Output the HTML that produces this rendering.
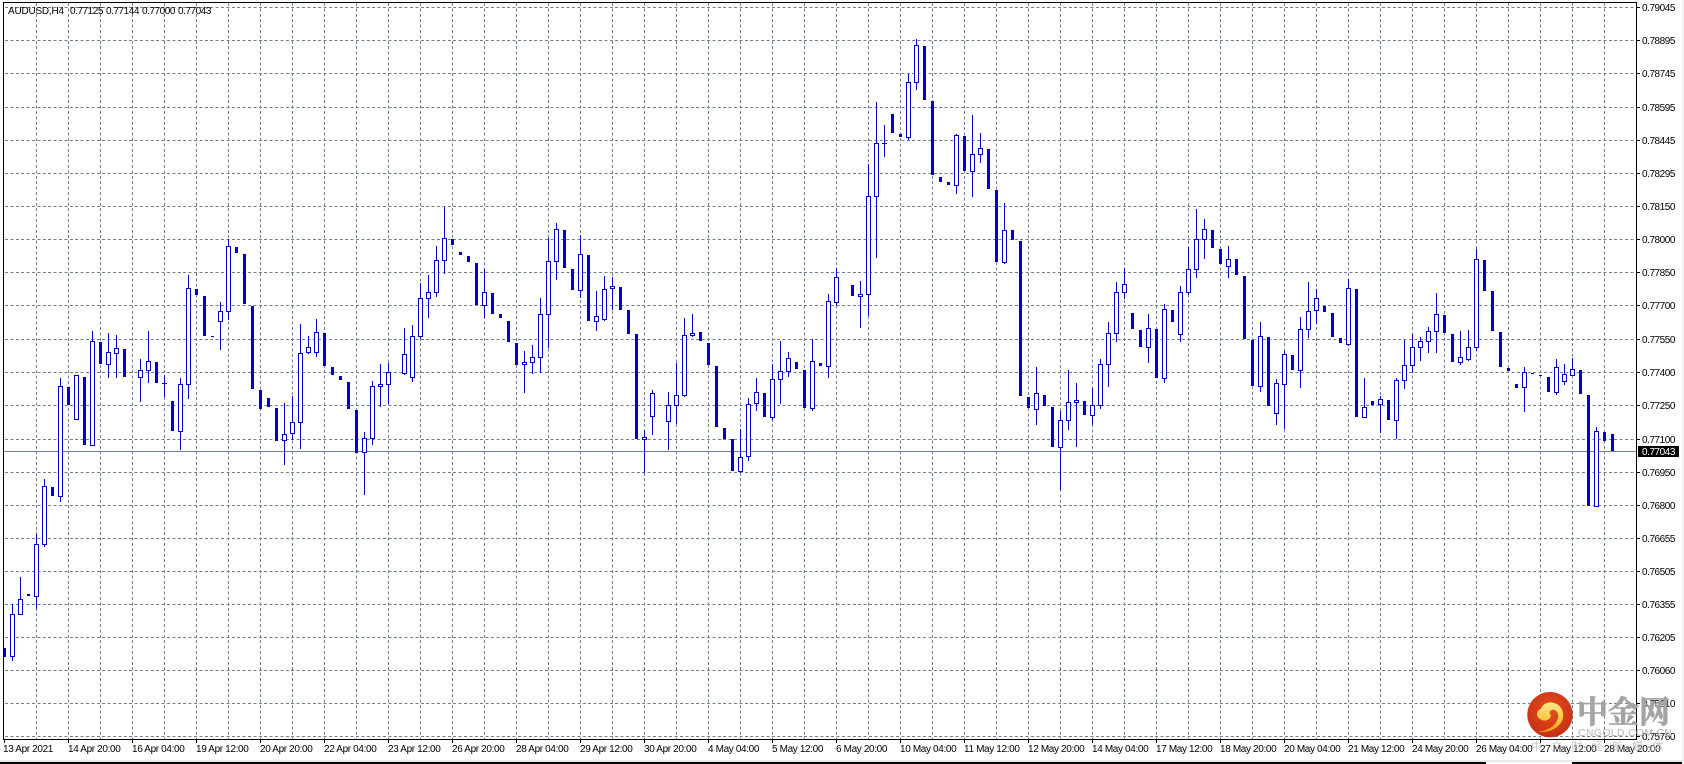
<!DOCTYPE html>
<html><head><meta charset="utf-8"><title>AUDUSD,H4</title>
<style>
html,body{margin:0;padding:0;background:#fff;width:1684px;height:764px;overflow:hidden}
svg{display:block}
text{font-family:"Liberation Sans","Noto Sans CJK SC",sans-serif;font-size:10px;letter-spacing:-.45px;fill:#000}
.p text{letter-spacing:-.45px}
.t text{letter-spacing:-.36px}
</style></head><body>
<svg width="1684" height="764" viewBox="0 0 1684 764" xmlns="http://www.w3.org/2000/svg">
<defs>
<radialGradient id="r" cx=".5" cy=".4" r=".65"><stop offset="0" stop-color="#e8501a"/><stop offset="1" stop-color="#c42c16"/></radialGradient>
<linearGradient id="y" x1="0" y1="0" x2="0" y2="1"><stop offset="0" stop-color="#ffe88a"/><stop offset=".6" stop-color="#fbc63c"/><stop offset="1" stop-color="#ef9a16"/></linearGradient>
</defs>
<rect width="1684" height="764" fill="#fff"/>
<rect x="1682" width="2" height="764" fill="#f0f0f0"/>
<rect y="760" width="1684" height="2" fill="#e8e8e8"/>
<path d="M0 762h1486v2H0zM1572 762h110v2h-110z" fill="#000"/>
<!-- grid -->
<path fill="none" stroke="#708090" stroke-width="1" stroke-dasharray="3 2.4" shape-rendering="crispEdges" d="M5 7.5H1636M5 40.5H1636M5 73.5H1636M5 107.5H1636M5 140.5H1636M5 173.5H1636M5 206.5H1636M5 239.5H1636M5 272.5H1636M5 305.5H1636M5 339.5H1636M5 372.5H1636M5 405.5H1636M5 439.5H1636M5 472.5H1636M5 505.5H1636M5 538.5H1636M5 571.5H1636M5 604.5H1636M5 637.5H1636M5 670.5H1636M5 703.5H1636M5 736.5H1636"/>
<path fill="none" stroke="#708090" stroke-width="1" stroke-dasharray="3 2.4" shape-rendering="crispEdges" d="M36.5 3V739M68.5 3V739M100.5 3V739M132.5 3V739M164.5 3V739M196.5 3V739M228.5 3V739M260.5 3V739M292.5 3V739M324.5 3V739M356.5 3V739M388.5 3V739M420.5 3V739M452.5 3V739M484.5 3V739M516.5 3V739M548.5 3V739M580.5 3V739M612.5 3V739M644.5 3V739M676.5 3V739M708.5 3V739M740.5 3V739M772.5 3V739M804.5 3V739M836.5 3V739M868.5 3V739M900.5 3V739M932.5 3V739M964.5 3V739M996.5 3V739M1028.5 3V739M1060.5 3V739M1092.5 3V739M1124.5 3V739M1156.5 3V739M1188.5 3V739M1220.5 3V739M1252.5 3V739M1284.5 3V739M1316.5 3V739M1348.5 3V739M1380.5 3V739M1412.5 3V739M1444.5 3V739M1476.5 3V739M1508.5 3V739M1540.5 3V739M1572.5 3V739M1604.5 3V739"/>
<!-- bid line -->
<rect x="4" y="451" width="1632" height="1" fill="#708090"/>
<!-- wicks -->
<path fill="none" stroke="#0000cd" stroke-width="1" shape-rendering="crispEdges" d="M12.5 604V661M20.5 577V600M36.5 534V609M44.5 479V547M60.5 378V502M92.5 331V342M108.5 333V378M116.5 335V378M140.5 359V402M148.5 331V383M164.5 375V397M180.5 378V450M188.5 275V399M220.5 302V350M228.5 239V320M284.5 403V465M292.5 396V440M300.5 324V449M308.5 336V354M316.5 319V357M364.5 432V495M372.5 381V445M380.5 364V407M388.5 363V404M404.5 328V375M412.5 325V382M420.5 283V339M428.5 275V318M436.5 246V297M444.5 207V274M484.5 269V318M524.5 351V393M532.5 345V374M540.5 298V373M548.5 238V348M556.5 223V280M580.5 235V298M596.5 291V331M604.5 276V321M612.5 277V310M644.5 430V473M652.5 390V435M668.5 392V450M676.5 363V424M684.5 318V397M692.5 314V337M740.5 429V473M748.5 398V461M756.5 378V411M772.5 364V420M780.5 341V404M788.5 352V377M812.5 339V411M828.5 294V378M836.5 268V306M860.5 281V328M868.5 164V316M876.5 102V258M884.5 125V157M908.5 74V140M916.5 39V90M956.5 134V194M972.5 115V197M980.5 133V163M1004.5 203V264M1036.5 367V425M1060.5 411V490M1068.5 370V430M1076.5 383V447M1092.5 388V425M1100.5 359V409M1108.5 322V387M1116.5 282V342M1124.5 268V299M1148.5 314V363M1164.5 304V383M1180.5 286V342M1188.5 247V295M1196.5 209V278M1204.5 219V259M1228.5 246V278M1260.5 322V392M1276.5 379V425M1284.5 351V429M1300.5 317V388M1308.5 282V338M1316.5 289V324M1348.5 279V346M1364.5 378V408M1380.5 396V433M1396.5 378V439M1404.5 340V389M1412.5 334V373M1420.5 337V361M1428.5 327V353M1436.5 293V353M1460.5 331V365M1468.5 330V361M1476.5 249V351M1524.5 367V412M1556.5 359V395M1564.5 364V385M1572.5 358V370M1596.5 427V432M162 383.5h5M882 143.5h5"/>
<!-- hollow bodies -->
<path fill="#fff" stroke="#0000cd" stroke-width="1" shape-rendering="crispEdges" d="M10.5 614.5h4V656.5h-4zM18.5 599.5h4V614.5h-4zM34.5 544.5h4V596.5h-4zM42.5 486.5h4V544.5h-4zM58.5 386.5h4V496.5h-4zM74.5 375.5h4V419.5h-4zM90.5 341.5h4V445.5h-4zM106.5 352.5h4V364.5h-4zM114.5 348.5h4V353.5h-4zM138.5 370.5h4V377.5h-4zM146.5 361.5h4V370.5h-4zM178.5 384.5h4V431.5h-4zM186.5 288.5h4V384.5h-4zM218.5 311.5h4V321.5h-4zM226.5 246.5h4V311.5h-4zM282.5 434.5h4V440.5h-4zM290.5 422.5h4V433.5h-4zM298.5 353.5h4V422.5h-4zM306.5 347.5h4V352.5h-4zM314.5 332.5h4V352.5h-4zM362.5 438.5h4V452.5h-4zM370.5 386.5h4V438.5h-4zM378.5 384.5h4V386.5h-4zM386.5 372.5h4V384.5h-4zM402.5 354.5h4V373.5h-4zM410.5 336.5h4V377.5h-4zM418.5 298.5h4V336.5h-4zM426.5 292.5h4V298.5h-4zM434.5 260.5h4V292.5h-4zM442.5 238.5h4V260.5h-4zM482.5 292.5h4V305.5h-4zM522.5 362.5h4V364.5h-4zM530.5 357.5h4V362.5h-4zM538.5 314.5h4V357.5h-4zM546.5 261.5h4V314.5h-4zM554.5 229.5h4V261.5h-4zM578.5 254.5h4V290.5h-4zM594.5 316.5h4V321.5h-4zM602.5 289.5h4V319.5h-4zM610.5 286.5h4V288.5h-4zM642.5 437.5h4V439.5h-4zM650.5 393.5h4V416.5h-4zM666.5 405.5h4V421.5h-4zM674.5 395.5h4V405.5h-4zM682.5 335.5h4V395.5h-4zM690.5 333.5h4V335.5h-4zM738.5 457.5h4V471.5h-4zM746.5 404.5h4V456.5h-4zM754.5 392.5h4V403.5h-4zM770.5 379.5h4V417.5h-4zM778.5 371.5h4V379.5h-4zM786.5 358.5h4V371.5h-4zM810.5 361.5h4V408.5h-4zM826.5 301.5h4V366.5h-4zM834.5 277.5h4V302.5h-4zM858.5 294.5h4V296.5h-4zM866.5 196.5h4V294.5h-4zM874.5 143.5h4V196.5h-4zM906.5 82.5h4V137.5h-4zM914.5 45.5h4V82.5h-4zM954.5 135.5h4V185.5h-4zM970.5 154.5h4V171.5h-4zM978.5 148.5h4V154.5h-4zM1002.5 230.5h4V262.5h-4zM1034.5 393.5h4V409.5h-4zM1058.5 420.5h4V447.5h-4zM1066.5 402.5h4V420.5h-4zM1074.5 400.5h4V402.5h-4zM1090.5 405.5h4V415.5h-4zM1098.5 364.5h4V405.5h-4zM1106.5 333.5h4V364.5h-4zM1114.5 292.5h4V333.5h-4zM1122.5 284.5h4V292.5h-4zM1146.5 328.5h4V347.5h-4zM1162.5 309.5h4V378.5h-4zM1178.5 292.5h4V334.5h-4zM1186.5 269.5h4V292.5h-4zM1194.5 239.5h4V269.5h-4zM1202.5 229.5h4V239.5h-4zM1226.5 259.5h4V266.5h-4zM1258.5 336.5h4V386.5h-4zM1274.5 383.5h4V413.5h-4zM1282.5 354.5h4V384.5h-4zM1298.5 329.5h4V370.5h-4zM1306.5 311.5h4V329.5h-4zM1314.5 298.5h4V310.5h-4zM1346.5 288.5h4V344.5h-4zM1362.5 407.5h4V417.5h-4zM1378.5 399.5h4V404.5h-4zM1394.5 380.5h4V420.5h-4zM1402.5 365.5h4V380.5h-4zM1410.5 347.5h4V365.5h-4zM1418.5 341.5h4V347.5h-4zM1426.5 331.5h4V341.5h-4zM1434.5 314.5h4V331.5h-4zM1458.5 357.5h4V362.5h-4zM1466.5 347.5h4V359.5h-4zM1474.5 259.5h4V347.5h-4zM1522.5 372.5h4V387.5h-4zM1554.5 367.5h4V392.5h-4zM1562.5 374.5h4V381.5h-4zM1570.5 369.5h4V375.5h-4zM1594.5 431.5h4V506.5h-4z"/>
<!-- solid bodies -->
<path fill="#0000cd" shape-rendering="crispEdges" d="M4 648h2V657h-2zM27 594h3V596h-3zM51 487h3V496h-3zM67 387h3V405h-3zM83 377h3V445h-3zM99 342h3V364h-3zM123 349h3V377h-3zM155 362h3V383h-3zM171 401h3V431h-3zM195 289h3V295h-3zM203 296h3V336h-3zM211 336h3V337h-3zM235 247h3V253h-3zM243 254h3V304h-3zM251 306h3V389h-3zM259 390h3V409h-3zM267 398h3V407h-3zM275 408h3V441h-3zM323 333h3V366h-3zM331 367h3V375h-3zM339 376h3V380h-3zM347 382h3V409h-3zM355 410h3V453h-3zM451 239h3V245h-3zM459 252h3V255h-3zM467 256h3V262h-3zM475 263h3V305h-3zM491 293h3V314h-3zM499 314h3V318h-3zM507 321h3V342h-3zM515 343h3V365h-3zM563 230h3V268h-3zM571 269h3V290h-3zM587 255h3V321h-3zM619 287h3V310h-3zM627 310h3V334h-3zM635 334h3V439h-3zM699 332h3V341h-3zM707 343h3V365h-3zM715 366h3V427h-3zM723 428h3V439h-3zM731 439h3V471h-3zM763 393h3V417h-3zM795 362h3V369h-3zM803 370h3V408h-3zM819 363h3V366h-3zM851 285h3V296h-3zM891 114h3V133h-3zM899 134h3V137h-3zM923 46h3V100h-3zM931 101h3V175h-3zM939 177h3V182h-3zM947 182h3V185h-3zM963 136h3V171h-3zM987 149h3V189h-3zM995 190h3V262h-3zM1011 230h3V240h-3zM1019 241h3V396h-3zM1027 397h3V408h-3zM1043 395h3V406h-3zM1051 407h3V447h-3zM1083 401h3V415h-3zM1131 313h3V329h-3zM1139 330h3V347h-3zM1155 329h3V378h-3zM1171 310h3V322h-3zM1211 230h3V248h-3zM1219 249h3V264h-3zM1235 259h3V275h-3zM1243 276h3V339h-3zM1251 340h3V386h-3zM1267 337h3V406h-3zM1291 355h3V370h-3zM1323 306h3V312h-3zM1331 313h3V337h-3zM1339 338h3V343h-3zM1355 289h3V417h-3zM1371 401h3V405h-3zM1387 400h3V420h-3zM1443 315h3V333h-3zM1451 334h3V362h-3zM1483 260h3V291h-3zM1491 291h3V331h-3zM1499 332h3V367h-3zM1507 368h3V371h-3zM1515 384h3V388h-3zM1531 373h3V374h-3zM1539 375h3V376h-3zM1547 377h3V392h-3zM1579 370h3V394h-3zM1587 395h3V506h-3zM1603 432h3V441h-3zM1611 434h3V451h-3z"/>
<!-- frame -->
<path fill="#000" shape-rendering="crispEdges" d="M3 2h1634v1H3zM3 2h1v738H3zM3 739h1634v1H3zM1636 2h1v738h-1z"/>
<path fill="none" stroke="#000" stroke-width="1" shape-rendering="crispEdges" d="M1636 7.5h4M1636 40.5h4M1636 73.5h4M1636 107.5h4M1636 140.5h4M1636 173.5h4M1636 206.5h4M1636 239.5h4M1636 272.5h4M1636 305.5h4M1636 339.5h4M1636 372.5h4M1636 405.5h4M1636 439.5h4M1636 472.5h4M1636 505.5h4M1636 538.5h4M1636 571.5h4M1636 604.5h4M1636 637.5h4M1636 670.5h4M1636 703.5h4M1636 736.5h4M4.5 739v4M68.5 739v4M132.5 739v4M196.5 739v4M260.5 739v4M324.5 739v4M388.5 739v4M452.5 739v4M516.5 739v4M580.5 739v4M644.5 739v4M708.5 739v4M772.5 739v4M836.5 739v4M900.5 739v4M964.5 739v4M1028.5 739v4M1092.5 739v4M1156.5 739v4M1220.5 739v4M1284.5 739v4M1348.5 739v4M1412.5 739v4M1476.5 739v4M1540.5 739v4M1604.5 739v4"/>
<!-- header -->
<text x="8" y="14" style="letter-spacing:-.22px">AUDUSD,H4</text>
<text x="70" y="14">0.77125</text><text x="106" y="14">0.77144</text><text x="142" y="14">0.77000</text><text x="178" y="14">0.77043</text>
<!-- price axis -->
<g class="p">
<text x="1642" y="11">0.79045</text><text x="1642" y="44">0.78895</text><text x="1642" y="77">0.78745</text><text x="1642" y="111">0.78595</text><text x="1642" y="144">0.78445</text><text x="1642" y="177">0.78295</text><text x="1642" y="210">0.78150</text><text x="1642" y="243">0.78000</text><text x="1642" y="276">0.77850</text><text x="1642" y="309">0.77700</text><text x="1642" y="343">0.77550</text><text x="1642" y="376">0.77400</text><text x="1642" y="409">0.77250</text><text x="1642" y="443">0.77100</text><text x="1642" y="476">0.76950</text><text x="1642" y="509">0.76800</text><text x="1642" y="542">0.76655</text><text x="1642" y="575">0.76505</text><text x="1642" y="608">0.76355</text><text x="1642" y="641">0.76205</text><text x="1642" y="674">0.76060</text><text x="1642" y="707">0.75910</text><text x="1642" y="740">0.75760</text>
</g>
<rect x="1638" y="446" width="41" height="11" fill="#000"/>
<text x="1642" y="455" style="fill:#fff">0.77043</text>
<!-- time axis -->
<g class="t">
<text x="3" y="752">13 Apr 2021</text><text x="68" y="752">14 Apr 20:00</text><text x="132" y="752">16 Apr 04:00</text><text x="196" y="752">19 Apr 12:00</text><text x="260" y="752">20 Apr 20:00</text><text x="324" y="752">22 Apr 04:00</text><text x="388" y="752">23 Apr 12:00</text><text x="452" y="752">26 Apr 20:00</text><text x="516" y="752">28 Apr 04:00</text><text x="580" y="752">29 Apr 12:00</text><text x="644" y="752">30 Apr 20:00</text><text x="708" y="752">4 May 04:00</text><text x="772" y="752">5 May 12:00</text><text x="836" y="752">6 May 20:00</text><text x="900" y="752">10 May 04:00</text><text x="964" y="752">11 May 12:00</text><text x="1028" y="752">12 May 20:00</text><text x="1092" y="752">14 May 04:00</text><text x="1156" y="752">17 May 12:00</text><text x="1220" y="752">18 May 20:00</text><text x="1284" y="752">20 May 04:00</text><text x="1348" y="752">21 May 12:00</text><text x="1412" y="752">24 May 20:00</text><text x="1476" y="752">26 May 04:00</text><text x="1540" y="752">27 May 12:00</text><text x="1604" y="752">28 May 20:00</text>
</g>
<!-- watermark -->
<circle cx="1550" cy="714.7" r="22.7" fill="url(#r)"/>
<path d="M1538 732C1550 730 1556 725 1558 718C1559 713 1556 709 1552 710C1549 711 1549 714 1551 715C1551 719 1546 722 1542 720C1536 718 1535 711 1541 709C1542 704 1549 701 1554 703C1562 705 1565 714 1562 721C1558 729 1548 733 1538 732Z" fill="url(#y)"/>
<text x="1577" y="723" style="font-family:'Noto Serif CJK SC','Liberation Serif',serif;font-weight:700;font-size:31px;letter-spacing:0;fill:#a4a4a4;stroke:#a4a4a4;stroke-width:.7">中金网</text>
<text x="1578" y="736" style="font-size:10.5px;letter-spacing:.3px;fill:#b4b4b4">CNGOLD.COM.CN</text>
<text x="1531" y="750" style="font-family:'Noto Sans CJK SC',sans-serif;font-size:11px;letter-spacing:9.2px;fill:#b8b8b8;fill-opacity:.8">中文财经新媒体</text>
</svg>
</body></html>
